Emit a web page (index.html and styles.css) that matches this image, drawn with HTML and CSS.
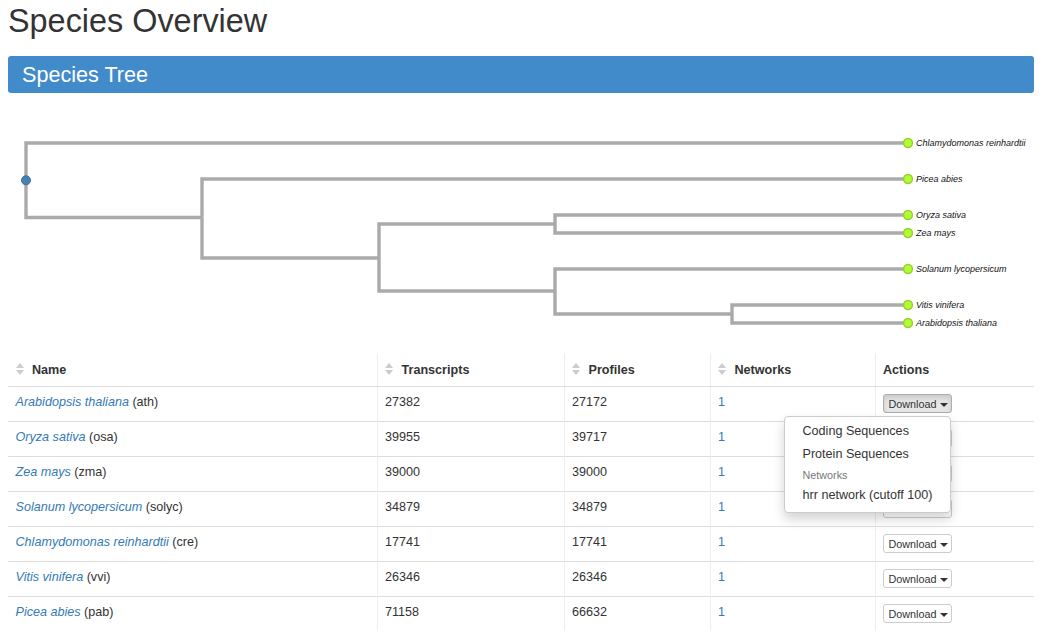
FILE: index.html
```html
<!DOCTYPE html>
<html lang="en">
<head>
  <meta charset="UTF-8">
  <meta name="viewport" content="width=device-width, initial-scale=1.0">
  <title>Species Overview</title>
  <link rel="stylesheet" href="styles.css">
</head>
<body>

<div class="container">
  <h1>Species Overview</h1>
  <div class="panel-heading">Species Tree</div>

  <svg class="tree" viewBox="8 93 1026 260" width="1026" height="260">
    <g class="links">
      <path d="M26 180V143H908"/>
      <path d="M26 180V217.5H202"/>
      <path d="M202 217.5V179H908"/>
      <path d="M202 217.5V258H379"/>
      <path d="M379 258V224H555"/>
      <path d="M379 258V291H555"/>
      <path d="M555 224V215H908"/>
      <path d="M555 224V233H908"/>
      <path d="M555 291V269H908"/>
      <path d="M555 291V314H732"/>
      <path d="M732 314V305H908"/>
      <path d="M732 314V323H908"/>
    </g>
    <circle class="root" cx="26" cy="180.3" r="4.5"/>
    <g class="leaves">
      <circle cx="908" cy="143" r="4.4"/>
      <circle cx="908" cy="179" r="4.4"/>
      <circle cx="908" cy="215" r="4.4"/>
      <circle cx="908" cy="233" r="4.4"/>
      <circle cx="908" cy="269" r="4.4"/>
      <circle cx="908" cy="305" r="4.4"/>
      <circle cx="908" cy="323" r="4.4"/>
    </g>
    <g class="labels">
      <text x="916" y="146">Chlamydomonas reinhardtii</text>
      <text x="916" y="182">Picea abies</text>
      <text x="916" y="218">Oryza sativa</text>
      <text x="916" y="236">Zea mays</text>
      <text x="916" y="272">Solanum lycopersicum</text>
      <text x="916" y="308">Vitis vinifera</text>
      <text x="916" y="326">Arabidopsis thaliana</text>
    </g>
  </svg>

  <table class="species">
    <colgroup>
      <col class="col-name">
      <col class="col-transcripts">
      <col class="col-profiles">
      <col class="col-networks">
      <col>
    </colgroup>
    <thead>
      <tr>
        <th><svg class="sort" viewBox="0 0 8 12" width="8" height="12"><path d="M4 0L8 5H0Z"/><path d="M0 7H8L4 12Z"/></svg>Name</th>
        <th><svg class="sort" viewBox="0 0 8 12" width="8" height="12"><path d="M4 0L8 5H0Z"/><path d="M0 7H8L4 12Z"/></svg>Transcripts</th>
        <th><svg class="sort" viewBox="0 0 8 12" width="8" height="12"><path d="M4 0L8 5H0Z"/><path d="M0 7H8L4 12Z"/></svg>Profiles</th>
        <th><svg class="sort" viewBox="0 0 8 12" width="8" height="12"><path d="M4 0L8 5H0Z"/><path d="M0 7H8L4 12Z"/></svg>Networks</th>
        <th>Actions</th>
      </tr>
    </thead>
    <tbody>
      <tr>
        <td><a href="#"><em>Arabidopsis thaliana</em></a> (ath)</td>
        <td>27382</td>
        <td>27172</td>
        <td><a href="#">1</a></td>
        <td class="actions">
          <button class="btn-download open">Download <span class="caret"></span></button>
          <ul class="dropdown-menu">
            <li><a href="#">Coding Sequences</a></li>
            <li><a href="#">Protein Sequences</a></li>
            <li class="dropdown-header">Networks</li>
            <li><a href="#">hrr network (cutoff 100)</a></li>
          </ul>
        </td>
      </tr>
      <tr>
        <td><a href="#"><em>Oryza sativa</em></a> (osa)</td>
        <td>39955</td>
        <td>39717</td>
        <td><a href="#">1</a></td>
        <td class="actions"><button class="btn-download">Download <span class="caret"></span></button></td>
      </tr>
      <tr>
        <td><a href="#"><em>Zea mays</em></a> (zma)</td>
        <td>39000</td>
        <td>39000</td>
        <td><a href="#">1</a></td>
        <td class="actions"><button class="btn-download">Download <span class="caret"></span></button></td>
      </tr>
      <tr>
        <td><a href="#"><em>Solanum lycopersicum</em></a> (solyc)</td>
        <td>34879</td>
        <td>34879</td>
        <td><a href="#">1</a></td>
        <td class="actions"><button class="btn-download">Download <span class="caret"></span></button></td>
      </tr>
      <tr>
        <td><a href="#"><em>Chlamydomonas reinhardtii</em></a> (cre)</td>
        <td>17741</td>
        <td>17741</td>
        <td><a href="#">1</a></td>
        <td class="actions"><button class="btn-download">Download <span class="caret"></span></button></td>
      </tr>
      <tr>
        <td><a href="#"><em>Vitis vinifera</em></a> (vvi)</td>
        <td>26346</td>
        <td>26346</td>
        <td><a href="#">1</a></td>
        <td class="actions"><button class="btn-download">Download <span class="caret"></span></button></td>
      </tr>
      <tr>
        <td><a href="#"><em>Picea abies</em></a> (pab)</td>
        <td>71158</td>
        <td>66632</td>
        <td><a href="#">1</a></td>
        <td class="actions"><button class="btn-download">Download <span class="caret"></span></button></td>
      </tr>
    </tbody>
  </table>
</div>

</body>
</html>
```

FILE: styles.css
```css
* {
  box-sizing: border-box;
}
body {
  margin: 0;
  font-family: "Liberation Sans", Arial, sans-serif;
  font-size: 12.6px;
  line-height: 20px;
  color: #333;
  background-color: #fff;
}
a {
  color: #337ab7;
  text-decoration: none;
}
.container {
  width: 1042px;
  padding: 0 8px;
}
h1 {
  margin: 0;
  height: 56px;
  padding-top: 1px;
  font-size: 32.4px;
  font-weight: 400;
  line-height: 40px;
}
.panel-heading {
  height: 37px;
  padding: 6px 14px;
  font-size: 21.6px;
  line-height: 25px;
  color: #fff;
  background-color: #428bca;
  border-radius: 3px;
}

/* tree */
.tree {
  display: block;
}
.links path {
  fill: none;
  stroke: #aaa;
  stroke-width: 3.4;
}
.root {
  fill: #4682b4;
  stroke: #3a6f9f;
  stroke-width: 1;
}
.leaves circle {
  fill: #adff2f;
  stroke: #9acd32;
  stroke-width: 1.5;
}
.labels text {
  font-size: 9px;
  font-style: italic;
  fill: #111;
}

/* table */
.species {
  width: 1026px;
  table-layout: fixed;
  border-collapse: collapse;
}
.col-name {
  width: 369px;
}
.col-transcripts {
  width: 187px;
}
.col-profiles {
  width: 146px;
}
.col-networks {
  width: 165px;
}
th {
  height: 33px;
  padding: 7px 7.5px 0;
  text-align: left;
  vertical-align: top;
  border-bottom: 1px solid #ddd;
  border-left: 1px solid #eee;
}
td {
  height: 35px;
  padding: 5px 7.5px 0;
  vertical-align: top;
  border-top: 1px solid #ddd;
  border-left: 1px solid #eee;
}
th:first-child, td:first-child {
  border-left: 0;
}
.sort {
  margin-right: 8.5px;
  vertical-align: -1px;
  fill: #ccc;
}
td.actions {
  position: relative;
  padding-top: 7px;
  padding-left: 7px;
}
/* the action cells sit a pixel higher than the rest of their row */
tr + tr .actions {
  border-top-color: transparent;
}
tr + tr .actions::before {
  content: "";
  position: absolute;
  top: -1px;
  left: 0;
  right: 0;
  height: 1px;
  background-color: #ddd;
}
.btn-download {
  display: block;
  width: 69px;
  height: 19px;
  padding: 2px 0 0 5px;
  font-family: inherit;
  font-size: 10.8px;
  line-height: 15px;
  text-align: left;
  color: #333;
  background-color: #fff;
  border: 1px solid #ccc;
  border-radius: 3px;
}
.btn-download.open {
  background-color: #e6e6e6;
  border-color: #adadad;
  box-shadow: inset 0 3px 5px rgba(0, 0, 0, 0.125);
}
.caret {
  display: inline-block;
  vertical-align: middle;
  border-top: 4px solid #333;
  border-right: 4.5px solid transparent;
  border-left: 4.5px solid transparent;
}
.dropdown-menu {
  position: absolute;
  top: 29px;
  right: 83px;
  z-index: 10;
  width: 167px;
  height: 97px;
  margin: 0;
  padding: 4px 0;
  list-style: none;
  background-color: #fff;
  border: 1px solid #ccc;
  border-radius: 4px;
  box-shadow: 0 6px 12px rgba(0, 0, 0, 0.175);
}
.dropdown-menu a {
  display: block;
  height: 23px;
  padding: 0 17.5px;
  line-height: 20px;
  color: #333;
}
.dropdown-header {
  height: 18px;
  padding: 0 17.5px;
  font-size: 10.8px;
  line-height: 16px;
  color: #777;
}
```
